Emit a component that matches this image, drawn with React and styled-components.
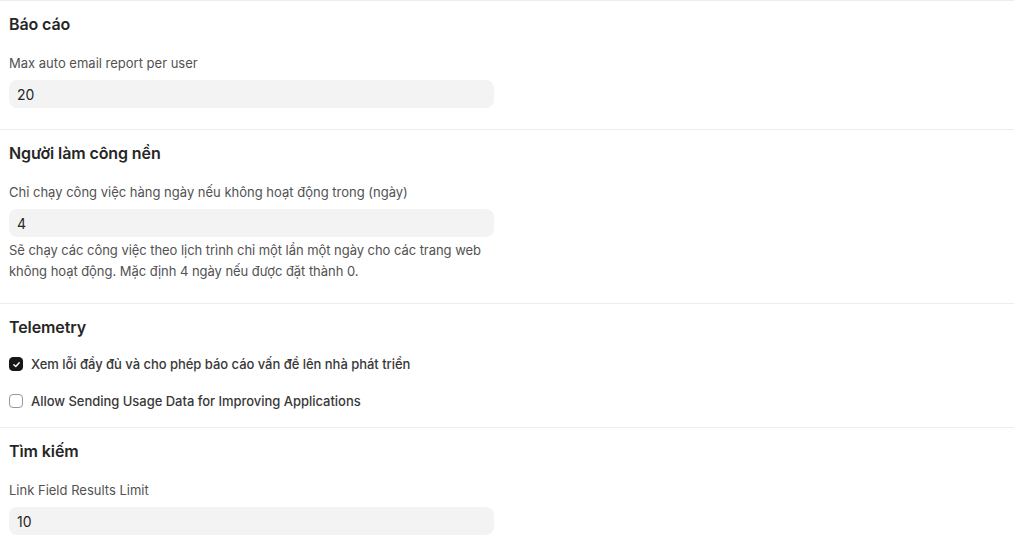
import styled, { createGlobalStyle } from 'styled-components';

const GlobalStyle = createGlobalStyle`
    body {
        margin: 0;
        background: #ffffff;
        font-family: Inter, "Noto Sans", sans-serif;
        -webkit-font-smoothing: antialiased;
    }
`;

const Page = styled.div`
    width: 1014px;
    display: flex;
    flex-direction: column;
`;

const Section = styled.section`
    border-top: 1px solid #ededed;
    padding: 11px 9px ${(p) => p.$pb || 21}px;
    display: flex;
    flex-direction: column;
`;

const Heading = styled.h3`
    margin: 0 0 17px;
    font-size: 16px;
    line-height: 24px;
    height: 24px;
    font-weight: 600;
    color: #262626;
    letter-spacing: -0.1px;
`;

const Field = styled.div`
    width: 485px;
    display: flex;
    flex-direction: column;
`;

const Label = styled.label`
    display: block;
    height: 20px;
    font-size: 13px;
    line-height: 20px;
    color: #525252;
    margin-bottom: 7px;
`;

const Input = styled.input`
    box-sizing: border-box;
    width: 100%;
    height: 28px;
    border: none;
    outline: none;
    border-radius: 8px;
    background: #f3f3f3;
    padding: 0 8px;
    font-family: inherit;
    font-size: 14px;
    color: #262626;
`;

const Description = styled.p`
    margin: 3px 0 0;
    font-size: 13px;
    line-height: 21px;
    color: #525252;
    letter-spacing: -0.05px;
`;

const Checks = styled.div`
    display: flex;
    flex-direction: column;
    gap: 17px;
    margin-top: -2px;
`;

const CheckRow = styled.label`
    display: flex;
    align-items: center;
    gap: 8px;
    height: 20px;
    font-size: 13px;
    font-weight: 500;
    color: #383838;
    letter-spacing: -0.03px;
`;

const Box = styled.span`
    box-sizing: border-box;
    width: 14px;
    height: 14px;
    border-radius: 4px;
    display: flex;
    align-items: center;
    justify-content: center;
    background: ${(p) => (p.$checked ? '#171717' : '#ffffff')};
    border: 1px solid ${(p) => (p.$checked ? '#171717' : '#999999')};
`;

const Check = ({ checked, children }) => (
    <CheckRow>
        <Box $checked={checked}>
            {checked && (
                <svg width="9" height="9" viewBox="0 0 10 10" fill="none">
                    <path d="M2 5.2 L4.2 7.3 L8 3" stroke="#fff" strokeWidth="1.6" strokeLinecap="round" strokeLinejoin="round" />
                </svg>
            )}
        </Box>
        {children}
    </CheckRow>
);

const App = () => {
    return (
        <Page>
            <GlobalStyle />
            <Section>
                <Heading>Báo cáo</Heading>
                <Field>
                    <Label>Max auto email report per user</Label>
                    <Input defaultValue="20" />
                </Field>
            </Section>
            <Section $pb={21}>
                <Heading>Người làm công nền</Heading>
                <Field>
                    <Label>Chỉ chạy công việc hàng ngày nếu không hoạt động trong (ngày)</Label>
                    <Input defaultValue="4" />
                    <Description>
                        Sẽ chạy các công việc theo lịch trình chỉ một lần một ngày cho các trang web không hoạt động. Mặc định 4 ngày nếu được đặt thành 0.
                    </Description>
                </Field>
            </Section>
            <Section $pb={16}>
                <Heading>Telemetry</Heading>
                <Checks>
                    <Check checked>Xem lỗi đầy đủ và cho phép báo cáo vấn đề lên nhà phát triển</Check>
                    <Check>Allow Sending Usage Data for Improving Applications</Check>
                </Checks>
            </Section>
            <Section>
                <Heading>Tìm kiếm</Heading>
                <Field>
                    <Label>Link Field Results Limit</Label>
                    <Input defaultValue="10" />
                </Field>
            </Section>
        </Page>
    );
};

export default App;
